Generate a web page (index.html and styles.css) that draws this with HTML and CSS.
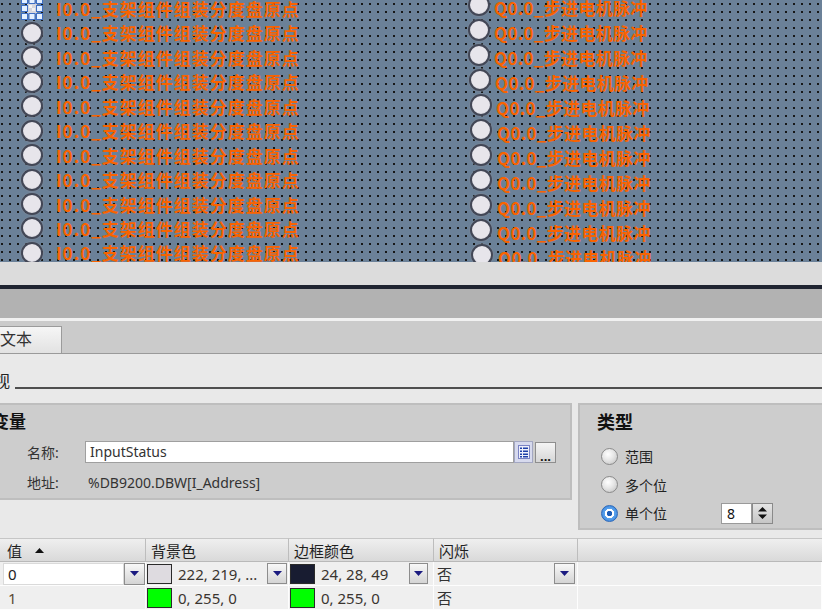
FILE: index.html
```html
<!DOCTYPE html>
<html lang="zh-CN">
<head>
<meta charset="utf-8">
<link rel="stylesheet" href="styles.css">
</head>
<body>
<div class="canvas">
  <div class="col col-left">
    <div class="row">
      <svg class="handles" viewBox="0 0 22 23" width="22" height="23">
        <rect x="6" y="6" width="10" height="11" fill="#d6d6dc"/>
        <rect x="8" y="8" width="3" height="3" fill="#f2f2f2"/>
        <rect x="11" y="11" width="3" height="3" fill="#f2f2f2"/>
        <g fill="#e4f0ff" stroke="#3d6fc6" stroke-width="1">
          <rect x="0.5" y="0.5" width="6" height="6"/>
          <rect x="8" y="0.5" width="6" height="6"/>
          <rect x="15.5" y="0.5" width="6" height="6"/>
          <rect x="0.5" y="8.5" width="6" height="6"/>
          <rect x="15.5" y="8.5" width="6" height="6"/>
          <rect x="0.5" y="16.5" width="6" height="6"/>
          <rect x="8" y="16.5" width="6" height="6"/>
          <rect x="15.5" y="16.5" width="6" height="6"/>
        </g>
      </svg>
      <span class="tag">I0.0_支架组件组装分度盘原点</span>
    </div>
    <div class="row"><span class="lamp"></span><span class="tag">I0.0_支架组件组装分度盘原点</span></div>
    <div class="row"><span class="lamp"></span><span class="tag">I0.0_支架组件组装分度盘原点</span></div>
    <div class="row"><span class="lamp"></span><span class="tag">I0.0_支架组件组装分度盘原点</span></div>
    <div class="row"><span class="lamp"></span><span class="tag">I0.0_支架组件组装分度盘原点</span></div>
    <div class="row"><span class="lamp"></span><span class="tag">I0.0_支架组件组装分度盘原点</span></div>
    <div class="row"><span class="lamp"></span><span class="tag">I0.0_支架组件组装分度盘原点</span></div>
    <div class="row"><span class="lamp"></span><span class="tag">I0.0_支架组件组装分度盘原点</span></div>
    <div class="row"><span class="lamp"></span><span class="tag">I0.0_支架组件组装分度盘原点</span></div>
    <div class="row"><span class="lamp"></span><span class="tag">I0.0_支架组件组装分度盘原点</span></div>
    <div class="row"><span class="lamp"></span><span class="tag">I0.0_支架组件组装分度盘原点</span></div>
  </div>
  <div class="col col-right">
    <div class="row"><span class="lamp"></span><span class="tag">Q0.0_步进电机脉冲</span></div>
    <div class="row"><span class="lamp"></span><span class="tag">Q0.0_步进电机脉冲</span></div>
    <div class="row"><span class="lamp"></span><span class="tag">Q0.0_步进电机脉冲</span></div>
    <div class="row"><span class="lamp"></span><span class="tag">Q0.0_步进电机脉冲</span></div>
    <div class="row"><span class="lamp"></span><span class="tag">Q0.0_步进电机脉冲</span></div>
    <div class="row"><span class="lamp"></span><span class="tag">Q0.0_步进电机脉冲</span></div>
    <div class="row"><span class="lamp"></span><span class="tag">Q0.0_步进电机脉冲</span></div>
    <div class="row"><span class="lamp"></span><span class="tag">Q0.0_步进电机脉冲</span></div>
    <div class="row"><span class="lamp"></span><span class="tag">Q0.0_步进电机脉冲</span></div>
    <div class="row"><span class="lamp"></span><span class="tag">Q0.0_步进电机脉冲</span></div>
    <div class="row"><span class="lamp"></span><span class="tag">Q0.0_步进电机脉冲</span></div>
  </div>
</div>

<div class="band1"></div>
<div class="band2"></div>
<div class="tabbar"><div class="tab">文本</div></div>

<div class="content">
  <div class="viewhead"><span class="viewtitle">视</span><div class="rule"></div></div>

  <div class="groups">
    <div class="grp grp-var">
      <div class="grp-title">变量</div>
      <div class="field">
        <span class="flabel">名称:</span>
        <div class="input">InputStatus</div>
        <div class="btn-list">
          <svg viewBox="0 0 12 14" width="12" height="14">
            <rect x="0.5" y="0.5" width="11" height="13" fill="#eef0fb" stroke="#7b83c4"/>
            <g fill="#1d3fa8">
              <rect x="2" y="2.5" width="2" height="1.5"/><rect x="5" y="2.5" width="5" height="1.5"/>
              <rect x="2" y="5.5" width="2" height="1.5"/><rect x="5" y="5.5" width="5" height="1.5"/>
              <rect x="2" y="8.5" width="2" height="1.5"/><rect x="5" y="8.5" width="5" height="1.5"/>
              <rect x="2" y="11" width="2" height="1.5"/><rect x="5" y="11" width="5" height="1.5"/>
            </g>
          </svg>
        </div>
        <div class="btn-more"><span class="dots">...</span></div>
      </div>
      <div class="field field-addr">
        <span class="flabel">地址:</span>
        <span class="addr">%DB9200.DBW[I_Address]</span>
      </div>
    </div>

    <div class="grp grp-type">
      <div class="grp-title type-title">类型</div>
      <div class="radio-row"><span class="radio"></span><span class="rlabel">范围</span></div>
      <div class="radio-row"><span class="radio"></span><span class="rlabel">多个位</span></div>
      <div class="radio-row">
        <span class="radio radio-on"></span><span class="rlabel">单个位</span>
        <div class="spin-input">8</div>
        <div class="spin-btn">
          <svg viewBox="0 0 11 14" width="11" height="14">
            <path d="M1 5.5 L5.5 1 L10 5.5Z M1 8.5 L5.5 13 L10 8.5Z" fill="#111"/>
          </svg>
        </div>
      </div>
    </div>
  </div>

  <div class="table">
    <div class="trow thead">
      <div class="th">值<svg class="sort" viewBox="0 0 9 5" width="9" height="5"><path d="M0 5 L4.5 0 L9 5Z" fill="#111"/></svg></div>
      <div class="th">背景色</div>
      <div class="th">边框颜色</div>
      <div class="th">闪烁</div>
      <div class="th th-last"></div>
    </div>
    <div class="trow">
      <div class="td td-val">
        <div class="cell-input">0</div>
        <div class="dd"><svg viewBox="0 0 9 5" width="9" height="5"><path d="M0 0 H9 L4.5 5Z" fill="#1b1b80"/></svg></div>
      </div>
      <div class="td td-color">
        <span class="swatch sw-bg"></span><span class="ctext">222, 219, ...</span>
        <div class="dd dd-bg"><svg viewBox="0 0 9 5" width="9" height="5"><path d="M0 0 H9 L4.5 5Z" fill="#1b1b80"/></svg></div>
      </div>
      <div class="td td-color">
        <span class="swatch sw-border"></span><span class="ctext">24, 28, 49</span>
        <div class="dd dd-border"><svg viewBox="0 0 9 5" width="9" height="5"><path d="M0 0 H9 L4.5 5Z" fill="#1b1b80"/></svg></div>
      </div>
      <div class="td td-flash">
        <span>否</span>
        <div class="dd dd-flash"><svg viewBox="0 0 9 5" width="9" height="5"><path d="M0 0 H9 L4.5 5Z" fill="#1b1b80"/></svg></div>
      </div>
      <div class="td td-last"></div>
    </div>
    <div class="trow">
      <div class="td td-val"><span class="plain">1</span></div>
      <div class="td td-color"><span class="swatch sw-green"></span><span class="ctext">0, 255, 0</span></div>
      <div class="td td-color"><span class="swatch sw-green"></span><span class="ctext">0, 255, 0</span></div>
      <div class="td td-flash"><span>否</span></div>
      <div class="td td-last"></div>
    </div>
  </div>
</div>
</body>
</html>
```

FILE: styles.css
```css
* { box-sizing: border-box; margin: 0; padding: 0; }

html, body { width: 822px; height: 610px; overflow: hidden; }

body {
  background: #e9e9e9;
  font-family: "Noto Sans", "Noto Sans CJK SC", sans-serif;
  font-size: 14px;
  color: #2a2a2a;
}

/* ---------- canvas ---------- */
.canvas {
  height: 262px;
  display: flex;
  overflow: hidden;
  background-color: #6b8198;
  background-image: radial-gradient(circle at 1px 1px, #151515 0.7px, transparent 1.1px);
  background-size: 8px 8px;
  background-position: 1px 3px;
}

.col { flex: none; }
.col-left { width: 468px; padding-left: 21px; margin-top: -3.7px; }
.col-right { margin-top: -7.5px; }

.row { display: flex; align-items: center; white-space: nowrap; }
.col-left .row { height: 24.45px; }
.col-right .row { height: 25px; }

.lamp {
  flex: none;
  width: 22px;
  height: 22px;
  border-radius: 50%;
  background: radial-gradient(circle at 50% 45%, #e7e5eb 0 62%, #c8c7ce 85%);
  border: 2px solid #434756;
  box-shadow: 0 0 0 1px rgba(125, 135, 150, 0.6);
}

.handles { flex: none; width: 22px; height: 23px; }

.tag {
  font-family: "Noto Sans CJK SC", sans-serif;
  font-weight: 700;
  font-size: 17px;
  line-height: 1;
  letter-spacing: 1px;
  color: #f96300;
}
.col-left .tag { margin-left: 13px; }
.col-right .tag { margin-left: 4px; padding-top: 4px; letter-spacing: 0.3px; }
.col-right .row:nth-child(n+4) { padding-left: 1px; }
.col-right .row:nth-child(n+5) { padding-left: 2px; }
.col-right .row:nth-child(n+6) .tag { margin-left: 5px; }
.col-right .row:nth-child(11) { padding-left: 3px; }

/* ---------- bars ---------- */
.band1 { height: 23px; background: #dcdcdc; }
.band2 {
  height: 36px;
  background: #b2b2b2;
  border-top: 4px solid #1f2431;
  border-bottom: 3px solid #f1f1f1;
}
.tabbar {
  height: 33px;
  background: #cbcbcb;
  border-bottom: 1px solid #9a9a9a;
  display: flex;
  align-items: flex-end;
}
.tab {
  margin-left: -10px;
  width: 72px;
  height: 27px;
  padding-left: 9px;
  border: 1px solid #9b9b9b;
  border-bottom: none;
  background: linear-gradient(#f6f6f6, #e2e2e2);
  font-size: 16px;
  line-height: 25px;
  color: #333;
}

/* ---------- content ---------- */
.viewhead {
  display: flex;
  align-items: flex-end;
  height: 20px;
  margin: 17px 0 0 -6px;
}
.viewtitle { font-size: 16px; line-height: 20px; color: #222; }
.rule { flex: 1; height: 2px; background: #4f4f4f; margin: 0 0 2px 5px; }

.groups {
  display: flex;
  align-items: flex-start;
  gap: 6px;
  margin-top: 12px;
}
.grp { background: #cdcdcd; border: 2px solid #bebebe; }
.grp-var { flex: none; width: 592px; height: 97px; margin-left: -20px; padding-left: 10px; }
.grp-type { flex: 1; height: 127px; margin-right: -10px; padding-left: 17px; }

.grp-title {
  font-family: "Noto Sans CJK SC", sans-serif;
  font-weight: 700;
  font-size: 17px;
  line-height: 20px;
  padding-top: 6px;
  color: #111;
}
.type-title { font-size: 18px; }

.field { display: flex; align-items: center; height: 22px; margin-top: 10px; }
.field-addr { margin-top: 8px; }
.flabel { flex: none; width: 58px; margin-left: 35px; color: #333; }
.input {
  width: 429px;
  height: 22px;
  background: #fff;
  border: 1px solid #9f9f9f;
  padding-left: 4px;
  line-height: 20px;
  color: #333;
}
.btn-list {
  width: 19px;
  height: 22px;
  background: #d7daee;
  border: 1px solid #a3a7c2;
  display: flex;
  align-items: center;
  justify-content: center;
}
.btn-more {
  margin-left: 2px;
  width: 21px;
  height: 21px;
  background: linear-gradient(#f4f4f4, #d6d6d6);
  border: 1px solid #8e8e8e;
  display: flex;
  justify-content: center;
  align-items: flex-end;
}
.dots { font-size: 13px; font-weight: 700; line-height: 12px; letter-spacing: 0; color: #111; }
.addr { margin-left: 3px; color: #333; }

.radio-row { display: flex; align-items: center; height: 24px; padding-left: 4px; margin-top: 13px; }
.radio-row + .radio-row { margin-top: 4.5px; }
.radio {
  flex: none;
  width: 17px;
  height: 17px;
  border-radius: 50%;
  border: 1px solid #8a8a8a;
  background: radial-gradient(circle at 40% 35%, #ffffff 0, #e6e6e6 45%, #bdbdbd 100%);
}
.radio-on {
  border-color: #2b67b8;
  background: radial-gradient(circle, #1c5cb6 0 2.5px, #ffffff 3px 4.5px, #5aa2ec 5px, #2f7ad6 100%);
}
.rlabel { flex: none; width: 96px; margin-left: 7px; color: #222; }
.spin-input {
  width: 31px;
  height: 21px;
  background: #fff;
  border: 1px solid #9a9a9a;
  padding-left: 5px;
  line-height: 19px;
  color: #111;
}
.spin-btn {
  width: 21px;
  height: 21px;
  background: linear-gradient(#e4e4e4, #c6c6c6);
  border: 1px solid #8a8a8a;
  display: flex;
  align-items: center;
  justify-content: center;
}

/* ---------- table ---------- */
.table { margin-top: 8px; }
.trow { display: grid; grid-template-columns: 146px 143px 145px 144px 1fr; }
.th {
  height: 24px;
  display: flex;
  align-items: center;
  padding-left: 5px;
  background: linear-gradient(#efefef, #d9d9d9);
  border-top: 1px solid #c6c6c6;
  border-bottom: 1px solid #b9b9b9;
  border-right: 1px solid #bdbdbd;
  font-size: 15px;
  color: #1f1f1f;
}
.th:first-child { padding-left: 7px; }
.sort { margin-left: 13px; }
.th-last { margin-right: -10px; }

.td {
  height: 24px;
  display: flex;
  align-items: center;
  background: #efefef;
  border-right: 1px solid #fdfdfd;
  border-bottom: 1px solid #fdfdfd;
  font-size: 15px;
  color: #333;
}
.td-val { padding-left: 3px; }
.td-color { padding-left: 1px; }
.td-flash { padding-left: 3px; }
.plain { padding-left: 5px; color: #5a4a35; }

.cell-input {
  flex: 1;
  height: 22px;
  background: #fff;
  border: 1px solid #dadada;
  padding-left: 4px;
  line-height: 20px;
  color: #222;
}
.dd {
  flex: none;
  width: 21px;
  height: 22px;
  background: linear-gradient(#f8f8f8, #d4d4d4);
  border: 1px solid #8d8d8d;
  display: flex;
  align-items: center;
  justify-content: center;
}
.dd-bg { margin-left: auto; width: 20px; height: 21px; margin-right: 1px; }
.dd-border { margin-left: auto; width: 19px; height: 21px; margin-right: 5px; }
.dd-flash { margin-left: auto; width: 21px; height: 21px; margin-right: 2px; }

.swatch { flex: none; width: 25px; height: 20px; border: 1px solid #2a2a2a; }
.sw-bg { background: #dedbe0; }
.sw-border { background: #181c31; }
.sw-green { background: #00ff00; }
.ctext { margin-left: 6px; color: #3a3530; white-space: nowrap; }
```
